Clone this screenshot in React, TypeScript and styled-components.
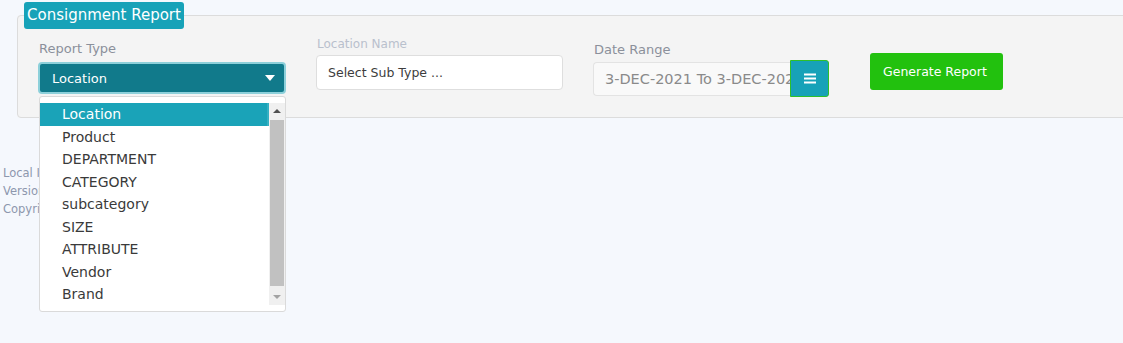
import React from 'react';
import styled, { createGlobalStyle } from 'styled-components';

const Global = createGlobalStyle`
  html, body {
    margin: 0;
    padding: 0;
    background: #f5f8fd;
    font-family: 'DejaVu Sans', 'Noto Sans', sans-serif;
  }
`;

const Page = styled.div`
  position: relative;
  width: 1123px;
  height: 343px;
  overflow: hidden;
  padding-top: 2px;
  box-sizing: border-box;
`;

const Panel = styled.fieldset`
  margin: 0 -10px 0 17px;
  padding: 0 0 0 20px;
  height: 116px;
  box-sizing: border-box;
  background: #f4f4f4;
  border: 1px solid #dcdcdc;
  border-radius: 4px;
  min-width: 0;
`;

const Legend = styled.legend`
  margin-left: -14px;
  padding: 0 3px;
  height: 27px;
  line-height: 26px;
  background: #17a2b8;
  color: #fff;
  font-size: 15px;
  border-radius: 3px;
  box-sizing: border-box;
`;

const Row = styled.div`
  display: flex;
  align-items: flex-start;
`;

const Field = styled.div<{ $top: number; $width: number; $gap?: number }>`
  position: relative;
  margin-top: ${p => p.$top}px;
  width: ${p => p.$width}px;
  margin-right: ${p => p.$gap ?? 0}px;
`;

const Label = styled.div<{ $light?: boolean; $size?: number; $mb?: number }>`
  font-size: ${p => p.$size ?? 13}px;
  line-height: 16px;
  color: ${p => (p.$light ? '#b9c0cd' : '#8b909b')};
  margin: 0 0 ${p => p.$mb ?? 5}px 1px;
`;

const Select = styled.div`
  display: flex;
  align-items: center;
  justify-content: space-between;
  height: 32px;
  box-sizing: border-box;
  padding: 0 9px 0 12px;
  background: #117a8b;
  border: 2px solid #8dd0da;
  border-radius: 4px;
  color: #fff;
  font-size: 13px;
`;

const Caret = styled.span`
  width: 0;
  height: 0;
  border-left: 5px solid transparent;
  border-right: 5px solid transparent;
  border-top: 6px solid #fff;
`;

const Menu = styled.div`
  position: absolute;
  top: calc(100% + 2px);
  left: 1px;
  width: 247px;
  height: 216px;
  box-sizing: border-box;
  padding-top: 6px;
  background: #fff;
  border: 1px solid #dadada;
  border-radius: 3px;
  display: flex;
  z-index: 5;
`;

const Options = styled.div`
  flex: 1;
`;

const Option = styled.div<{ $active?: boolean }>`
  height: 22.5px;
  line-height: 22.5px;
  padding-left: 22px;
  font-size: 14px;
  color: ${p => (p.$active ? '#fff' : '#3a3a3a')};
  background: ${p => (p.$active ? '#1aa3b8' : 'transparent')};
  border-right: ${p => (p.$active ? '2px solid #35b0c2' : 'none')};
`;

const Scroll = styled.div`
  width: 16px;
  height: 202px;
  background: #f0f0f0;
  display: flex;
  flex-direction: column;
  align-items: center;
`;

const Arrow = styled.span<{ $up?: boolean }>`
  flex: 0 0 auto;
  margin: 6px 0;
  width: 0;
  height: 0;
  border-left: 4px solid transparent;
  border-right: 4px solid transparent;
  ${p => (p.$up ? 'border-bottom: 4px solid #505050;' : 'border-top: 4px solid #a3a3a3;')}
`;

const Thumb = styled.div`
  width: 14px;
  flex: 1;
  background: #c1c1c1;
  margin: 1px 0 3px;
`;

const Input = styled.div`
  height: 35px;
  box-sizing: border-box;
  padding: 0 11px;
  display: flex;
  align-items: center;
  background: #fff;
  border: 1px solid #dedede;
  border-radius: 4px;
  font-size: 12.5px;
  color: #3d3d3d;
`;

const Group = styled.div`
  display: flex;
  align-items: center;
`;

const DateInput = styled.div`
  width: 197px;
  height: 34px;
  box-sizing: border-box;
  padding: 0 11px;
  display: flex;
  align-items: center;
  white-space: nowrap;
  overflow: hidden;
  background: #f9f9f9;
  border: 1px solid #e3e3e3;
  border-right: none;
  border-radius: 4px 0 0 4px;
  font-size: 14.5px;
  color: #8a8a8a;
`;

const MenuButton = styled.div`
  width: 39px;
  height: 37px;
  box-sizing: border-box;
  display: flex;
  align-items: center;
  justify-content: center;
  background: #17a2b8;
  border: 1px solid #2ec02a;
  border-radius: 0 3px 3px 0;
`;

const Generate = styled.div`
  height: 37px;
  padding: 0 13px;
  display: flex;
  align-items: center;
  background: #22c10e;
  color: #fff;
  font-size: 12.5px;
  border-radius: 3px;
`;

const Footer = styled.div`
  margin: 46px 0 0 3px;
  font-size: 11.5px;
  line-height: 18px;
  color: #8d97ad;
`;

const options = ['Location', 'Product', 'DEPARTMENT', 'CATEGORY', 'subcategory', 'SIZE', 'ATTRIBUTE', 'Vendor', 'Brand'];

export default function App() {
  return (
    <Page>
      <Global />
      <Panel>
        <Legend>Consignment Report</Legend>
        <Row>
          <Field $top={12} $width={248} $gap={30}>
            <Label>Report Type</Label>
            <Select>
              Location
              <Caret />
            </Select>
            <Menu>
              <Options>
                {options.map((o, i) => (
                  <Option key={o} $active={i === 0}>
                    {o}
                  </Option>
                ))}
              </Options>
              <Scroll>
                <Arrow $up />
                <Thumb />
                <Arrow />
              </Scroll>
            </Menu>
          </Field>
          <Field $top={7} $width={247} $gap={30}>
            <Label $light $size={12} $mb={3}>Location Name</Label>
            <Input>Select Sub Type ...</Input>
          </Field>
          <Field $top={13} $width={236} $gap={41}>
            <Label $mb={2}>Date Range</Label>
            <Group>
              <DateInput>3-DEC-2021 To 3-DEC-2021</DateInput>
              <MenuButton>
                <svg width="12" height="11" viewBox="0 0 12 11">
                  <rect x="0" y="0.5" width="12" height="2" fill="#fff" />
                  <rect x="0" y="4.5" width="12" height="2" fill="#fff" />
                  <rect x="0" y="8.5" width="12" height="2" fill="#fff" />
                </svg>
              </MenuButton>
            </Group>
          </Field>
          <Field $top={24} $width={133}>
            <Generate>Generate Report</Generate>
          </Field>
        </Row>
      </Panel>
      <Footer>
        <div>Local IP : 192.168.1.10</div>
        <div>Version : 1.0.0</div>
        <div>Copyright © 2021</div>
      </Footer>
    </Page>
  );
}
